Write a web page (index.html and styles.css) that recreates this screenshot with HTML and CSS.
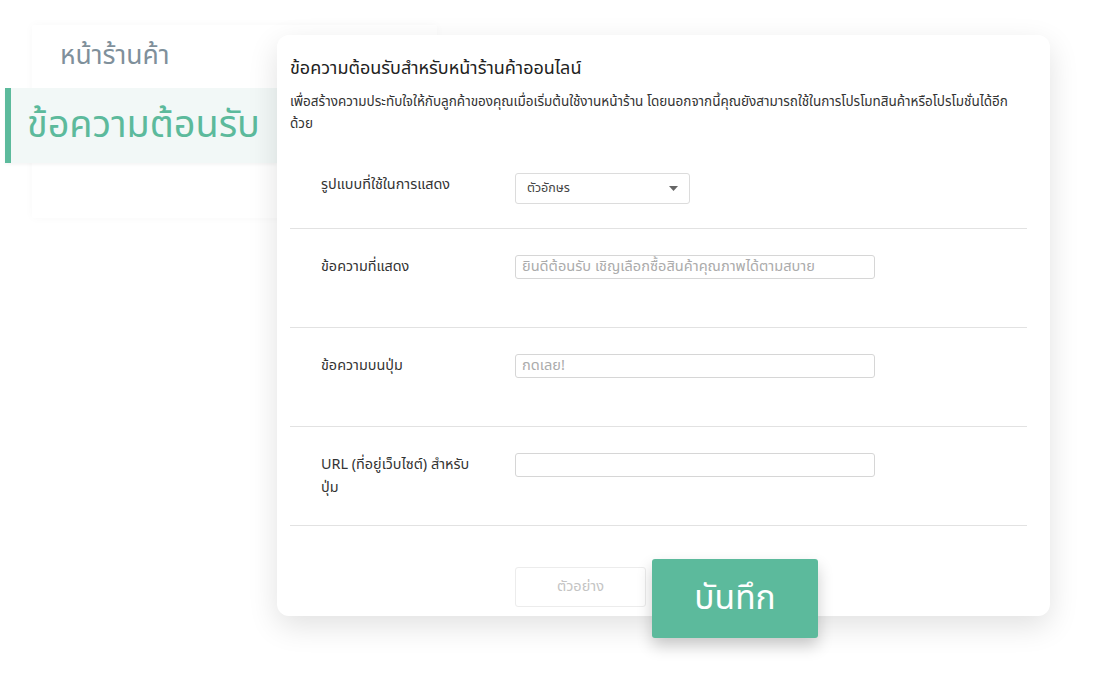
FILE: index.html
```html
<!DOCTYPE html>
<html lang="th">
<head>
<meta charset="utf-8">
<title>ข้อความต้อนรับ</title>
<link rel="stylesheet" href="styles.css">
</head>
<body>
<div class="stage">
  <aside class="side-card">
    <div class="side-item">หน้าร้านค้า</div>
    <div class="side-item active">ข้อความต้อนรับ</div>
  </aside>

  <main class="main-card">
    <h1 class="title">ข้อความต้อนรับสำหรับหน้าร้านค้าออนไลน์</h1>
    <p class="desc">เพื่อสร้างความประทับใจให้กับลูกค้าของคุณเมื่อเริ่มต้นใช้งานหน้าร้าน โดยนอกจากนี้คุณยังสามารถใช้ในการโปรโมทสินค้าหรือโปรโมชั่นได้อีก<br>ด้วย</p>

    <div class="row row-first">
      <div class="label">รูปแบบที่ใช้ในการแสดง</div>
      <div class="select">
        <span>ตัวอักษร</span>
        <svg class="caret" width="9" height="5" viewBox="0 0 9 5"><path d="M0 0h9L4.5 5z" fill="#666"/></svg>
      </div>
    </div>

    <div class="row">
      <div class="label">ข้อความที่แสดง</div>
      <div class="input placeholder">ยินดีต้อนรับ เชิญเลือกซื้อสินค้าคุณภาพได้ตามสบาย</div>
    </div>

    <div class="row">
      <div class="label">ข้อความบนปุ่ม</div>
      <div class="input placeholder">กดเลย!</div>
    </div>

    <div class="row">
      <div class="label">URL (ที่อยู่เว็บไซต์) สำหรับ<br>ปุ่ม</div>
      <div class="input"></div>
    </div>

    <div class="actions">
      <button class="btn-preview">ตัวอย่าง</button>
      <button class="btn-save">บันทึก</button>
    </div>
  </main>
</div>
</body>
</html>
```

FILE: styles.css
```css
* { box-sizing: border-box; }

html, body {
  margin: 0;
  background: #ffffff;
}

body {
  font-family: "Noto Sans Thai", "Noto Sans Thai UI", "Noto Sans", "Liberation Sans", sans-serif;
  color: #333;
  width: 1110px;
  height: 682px;
  overflow: hidden;
}

.stage {
  display: grid;
  grid-template-columns: 1110px;
  grid-template-rows: 682px;
}

.side-card,
.main-card {
  grid-area: 1 / 1;
  align-self: start;
  justify-self: start;
}

/* sidebar card (behind) */
.side-card {
  margin: 25px 0 0 32px;
  width: 405px;
  height: 193px;
  background: #fff;
  box-shadow: 0 0 10px rgba(0, 0, 0, 0.03);
  border-radius: 2px;
}

.side-item {
  height: 63px;
  display: flex;
  align-items: center;
  padding-left: 28px;
  font-size: 26.5px;
  color: #7f909b;
  padding-bottom: 2px;
}

.side-item.active {
  margin-left: -27px;
  width: 272px;
  height: 75px;
  padding: 0 0 0 16px;
  background: #f2f8f7;
  border-left: 6px solid #5cba9c;
  color: #5cba9c;
  font-size: 37.8px;
  box-shadow: 0 2px 3px rgba(0, 0, 0, 0.04);
}

/* main card */
.main-card {
  margin: 35px 0 0 277px;
  width: 773px;
  height: 581px;
  background: #fff;
  border-radius: 12px;
  box-shadow: 0 10px 30px rgba(0, 0, 0, 0.12);
  padding: 22px 23px 0 13px;
}

.title {
  margin: 0;
  font-size: 18px;
  font-weight: 400;
  color: #222;
  line-height: 24px;
}

.desc {
  margin: 10px 0 0;
  font-size: 13.5px;
  line-height: 22px;
  color: #333;
}

.row {
  display: flex;
  align-items: flex-start;
  border-bottom: 1px solid #e2e2e2;
  padding: 26px 0 0 31px;
  height: 99px;
}

.row-first {
  padding-top: 38px;
  height: 94px;
}

.label {
  width: 194px;
  font-size: 14.4px;
  line-height: 23px;
  color: #333;
}

.select {
  width: 175px;
  height: 31px;
  border: 1px solid #dcdcdc;
  border-radius: 3px;
  display: flex;
  align-items: center;
  justify-content: space-between;
  padding: 0 11px 0 11px;
  font-size: 12.5px;
  color: #444;
}

.caret { display: block; }

.input {
  width: 360px;
  height: 24px;
  border: 1px solid #d6d6d6;
  border-radius: 3px;
  font-size: 14.6px;
  line-height: 22px;
  padding: 0 6px;
  color: #333;
  white-space: nowrap;
  overflow: hidden;
}

.input.placeholder { color: #ababab; }

.actions {
  display: flex;
  align-items: flex-start;
  gap: 6px;
  height: 40px;
  margin: 41px 0 0 225px;
}

button {
  font-family: inherit;
  cursor: pointer;
}

.btn-preview {
  width: 131px;
  height: 40px;
  background: #fff;
  border: 1px solid #ececec;
  border-radius: 3px;
  color: #c4c4c4;
  font-size: 14.5px;
}

.btn-save {
  width: 166px;
  height: 79px;
  margin-top: -8px;
  background: #5cba9c;
  border: none;
  border-radius: 3px;
  color: #fff;
  font-size: 33.5px;
  box-shadow: 0 8px 16px rgba(0, 0, 0, 0.2);
}
```
